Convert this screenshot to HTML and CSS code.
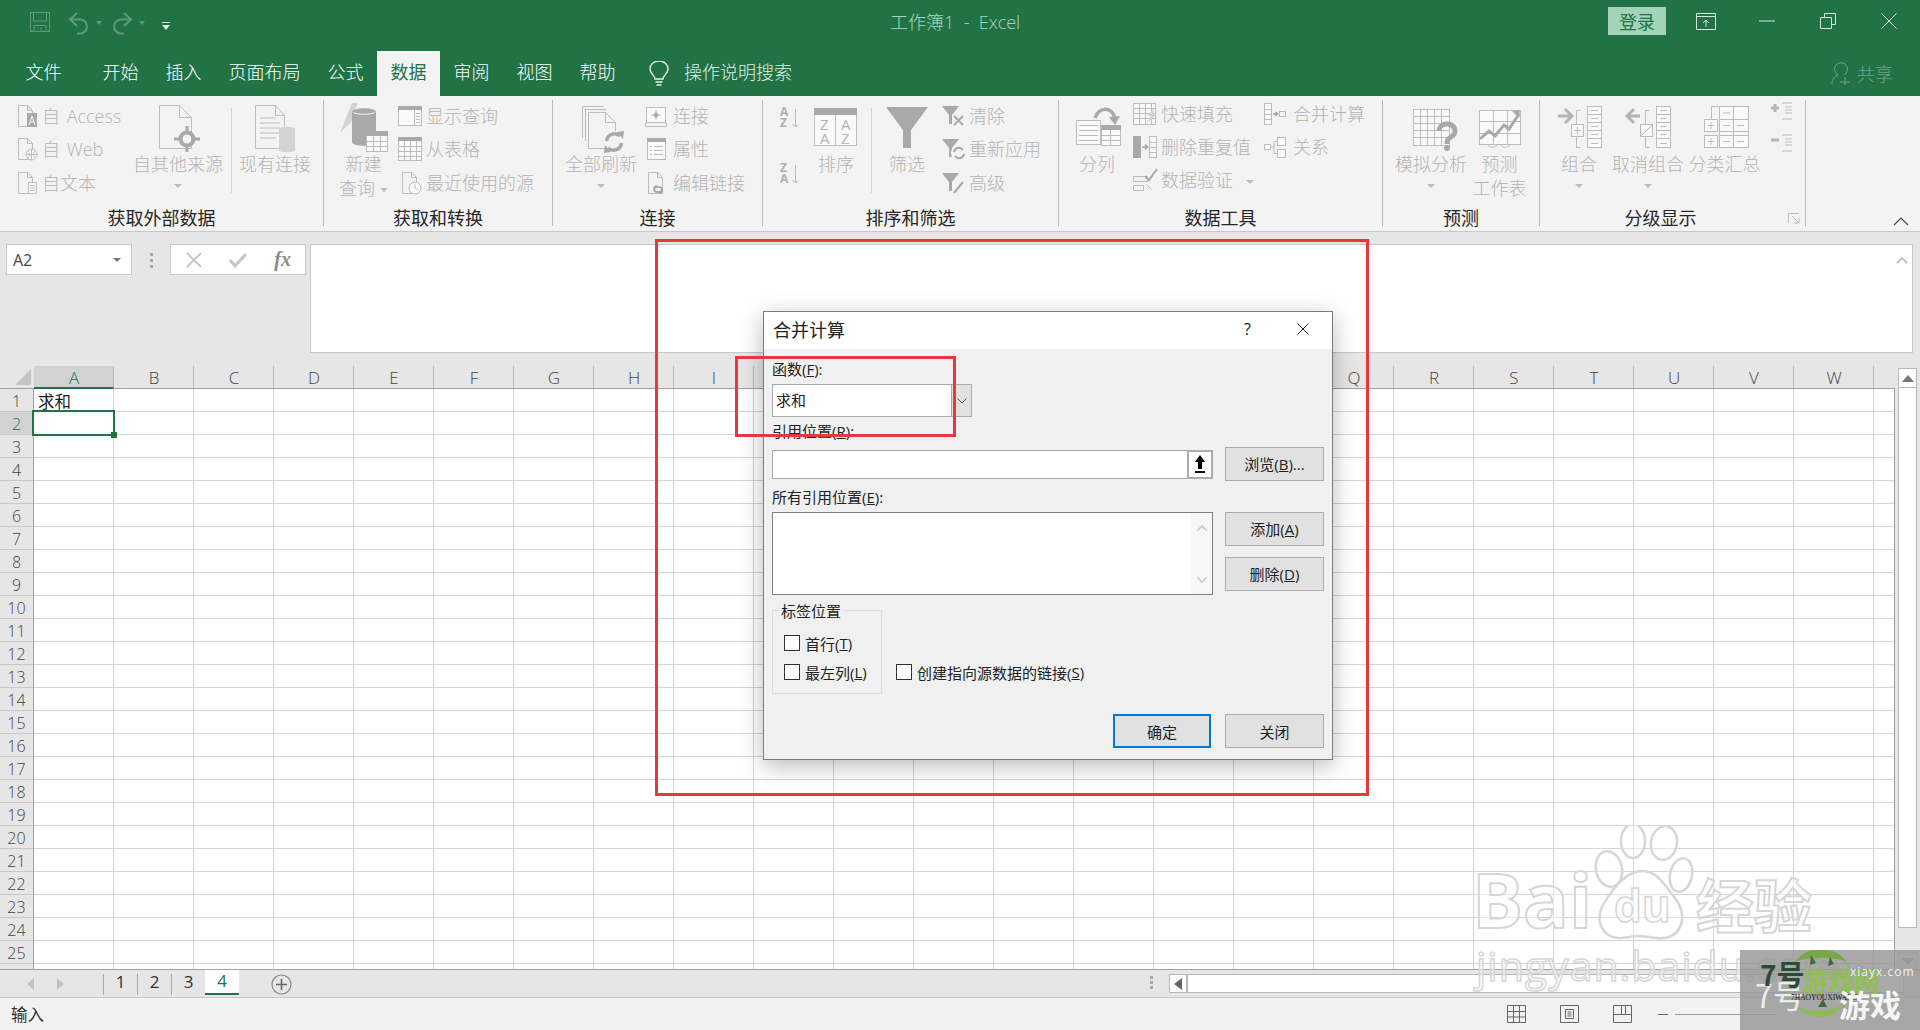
FILE: index.html
```html
<!DOCTYPE html>
<html lang="zh-CN">
<head>
<meta charset="utf-8">
<title>工作簿1 - Excel</title>
<link rel="stylesheet" href="styles.css">
</head>
<body>
<div class="app">
  <header class="titlebar">
    <div class="qat">
      <svg class="qi save" width="20" height="20" viewBox="0 0 20 20"><path d="M.5.5h19v19H.5z"/><path d="M3.5 1v8h13V1M4 13.5h12V19M4 13.5V19M11 15v4"/></svg>
      <svg class="qi undo" width="22" height="24" viewBox="0 0 22 24"><path d="M9 2 2 8.500l7 6.500" stroke-width="2"/><path d="M3 8.500h9a7 7 0 0 1 0 14h-3" stroke-width="2"/></svg>
      <span class="qcaret"></span>
      <svg class="qi redo" width="22" height="24" viewBox="0 0 22 24"><path d="M13 2l7 6.500-7 6.500" stroke-width="2"/><path d="M19 8.500h-9a7 7 0 0 0 0 14h3" stroke-width="2"/></svg>
      <span class="qcaret"></span>
      <span class="qcustom"></span>
    </div>
    <div class="doc-title">工作簿1&nbsp; -&nbsp; Excel</div>
    <div class="win">
      <span class="login">登录</span>
      <span class="winbtn"><svg class="wi" width="20" height="17" viewBox="0 0 20 17"><path d="M.5.5h19v16H.5zM.5 3.500h19M10 14V7M7 10l3-3 3 3"/></svg></span>
      <span class="winbtn"><svg class="wi" width="16" height="2" viewBox="0 0 16 2"><path d="M0 1h16"/></svg></span>
      <span class="winbtn"><svg class="wi" width="16" height="16" viewBox="0 0 16 16"><path d="M.5 4.500h11v11H.5zM4.500 4V.5h11v11H12"/></svg></span>
      <span class="winbtn"><svg class="wi" width="16" height="16" viewBox="0 0 16 16"><path d="M.5.5l15 15M15.500.5l-15 15"/></svg></span>
    </div>
  </header>

  <nav class="tabs">
    <span class="tab tab-file">文件</span>
    <span class="tab">开始</span>
    <span class="tab">插入</span>
    <span class="tab">页面布局</span>
    <span class="tab">公式</span>
    <span class="tab active">数据</span>
    <span class="tab">审阅</span>
    <span class="tab">视图</span>
    <span class="tab">帮助</span>
    <svg class="bulb" width="20" height="26" viewBox="0 0 20 26"><path d="M6 18c0-4-5-5-5-10a9 8 0 0 1 18 0c0 5-5 6-5 10zM6.500 21h7M7.500 24h5" stroke="#e8f2ec" stroke-width="1.400" fill="none"/></svg>
    <span class="search">操作说明搜索</span>
    <span class="share">
      <svg width="20" height="24" viewBox="0 0 20 24"><path d="M1 23c0-5 3-8 6-9a6.500 6.500 0 1 1 6 0M9 21h10M14 16v8" fill="none" stroke="#6ba587"/></svg>
      共享
    </span>
  </nav>

  <section class="ribbon">
    <!-- 获取外部数据 -->
    <div class="group g1">
      <div class="body">
        <div class="small-col w116 gap4">
          <div class="small"><svg class="ic" width="21" height="24" viewBox="0 0 21 24"><path d="M1.500 1.500h9l5 5v16h-14zM10.500 1.500v5h5"/><rect class="d" x="10" y="9" width="10" height="14"/><path class="wl" d="M12 21l3-9 3 9M13 18h4"/></svg><span class="latin">自 Access</span></div>
          <div class="small"><svg class="ic" width="21" height="24" viewBox="0 0 21 24"><path d="M1.500 1.500h9l5 5v16h-14zM10.500 1.500v5h5"/><circle class="wf" cx="14.500" cy="17.500" r="5.500"/><path d="M9 17.500h11M14.500 12v11M11 13.500c2 3 2 5 0 8M18 13.500c-2 3-2 5 0 8"/></svg><span class="latin">自 Web</span></div>
          <div class="small"><svg class="ic" width="21" height="24" viewBox="0 0 21 24"><path d="M1.500 1.500h9l5 5v16h-14zM10.500 1.500v5h5"/><rect class="wf" x="11.500" y="11.500" width="8" height="11"/><path d="M13 14.500h5M13 17h5M13 19.500h5"/></svg><span>自文本</span></div>
        </div>
        <div class="big w90">
          <svg class="ic bigi" width="48" height="48" viewBox="0 0 48 48"><path d="M5.500 1.500h20l12 12v31h-32zM25.500 1.500v12h12"/><circle class="ring" cx="33" cy="35" r="6.500"/><path class="thick" d="M33 22v6M33 42v6M20 35h6M40 35h6"/></svg>
          <span>自其他来源</span><i class="caret"></i>
        </div>
        <div class="vsep ml8"></div>
        <div class="big w86">
          <svg class="ic bigi" width="42" height="48" viewBox="0 0 42 48"><path d="M1.500 1.500h20l9 10v33h-29zM21.500 1.500v10h9M6 14h16M6 19h20M6 24h20M6 29h20M6 34h16"/><path class="lg" d="M25 25c0-3 16-3 16 0v21c0 3-16 3-16 0z"/></svg>
          <span>现有连接</span>
        </div>
      </div>
      <div class="glabel">获取外部数据</div>
    </div>

    <!-- 获取和转换 -->
    <div class="group g2">
      <div class="body pl5">
        <div class="big w69">
          <svg class="ic bigi" width="48" height="48" viewBox="0 0 48 48"><path class="lg" d="M0 29 12-1h6l-5 11h6z"/><path class="d" d="M12 8c0-5 24-5 24 0v30c0 5-24 5-24 0z"/><path class="wl" d="M13 8c2 3 20 3 22 0"/><rect class="wf" x="26.500" y="27.500" width="21" height="20"/><rect class="d" x="26" y="27" width="22" height="5"/><path d="M26.500 37.500h21M26.500 42.500h21M33.500 32v15M40.500 32v15"/></svg>
          <span>新建</span><span>查询<i class="caret inl"></i></span>
        </div>
        <div class="small-col gap4">
          <div class="small"><svg class="ic" width="24" height="24" viewBox="0 0 24 24"><rect class="wf" x=".5" y="2.500" width="23" height="19"/><rect class="d" x="0" y="2" width="24" height="4"/><path d="M16.500 6v15M18 9.500h4M18 12.500h4M18 15.500h4M18 18.500h4"/></svg><span>显示查询</span></div>
          <div class="small"><svg class="ic" width="24" height="24" viewBox="0 0 24 24"><rect class="wf" x=".5" y=".5" width="23" height="23"/><rect class="d" x="0" y="0" width="24" height="4"/><path d="M0 9.500h24M0 14.500h24M0 19.500h24M6.500 4v20M12.500 4v20M18.500 4v20"/></svg><span>从表格</span></div>
          <div class="small"><svg class="ic" width="24" height="24" viewBox="0 0 24 24"><path d="M4.500 1.500h9l5 5v16h-14zM13.500 1.500v5h5"/><circle class="wf" cx="17" cy="17" r="6"/><path d="M17 13.500V17l2.500 1.500"/></svg><span>最近使用的源</span></div>
        </div>
      </div>
      <div class="glabel">获取和转换</div>
    </div>

    <!-- 连接 -->
    <div class="group g3">
      <div class="body pl8">
        <div class="big w80">
          <svg class="ic bigi" width="48" height="48" viewBox="0 0 48 48"><path d="M5.500 34V2.500H26M8.500 37V5.500H29M11.500 8.500h17l10 10v26h-27zM28.500 8.500v10h10"/><circle class="bgf" cx="37" cy="38" r="11"/><path class="arrow" d="M29.500 37a8 8 0 0 1 13.500-5M44.500 39a8 8 0 0 1-13.500 5"/><path class="d" d="M40 28l7-1-1 8zM34 48l-7 1 1-8z"/></svg>
          <span>全部刷新</span><i class="caret"></i>
        </div>
        <div class="small-col ml4 gap6">
          <div class="small"><svg class="ic" width="22" height="24" viewBox="0 0 22 24"><rect class="wf" x="1.500" y="3.500" width="19" height="15"/><path d="M.5 18.500v4h21v-4M11 6v10M6 11h10"/><path class="d" d="M11 8l3 3-3 3-3-3z"/></svg><span>连接</span></div>
          <div class="small"><svg class="ic" width="22" height="24" viewBox="0 0 22 24"><rect class="wf" x="2.500" y="1.500" width="18" height="21"/><rect class="d" x="2" y="1" width="19" height="4"/><path d="M5 9.500h2M5 13.500h2M5 17.500h2M9 9.500h9M9 13.500h9M9 17.500h9"/></svg><span>属性</span></div>
          <div class="small"><svg class="ic" width="22" height="24" viewBox="0 0 22 24"><path d="M3.500 1.500h9l5 5v16h-14zM12.500 1.500v5h5"/><path class="chain" d="M9 19a3 3 0 0 1 3-3h2a3 3 0 0 1 0 6M17 18a3 3 0 0 1-3 3h-2a3 3 0 0 1 0-6"/></svg><span>编辑链接</span></div>
        </div>
      </div>
      <div class="glabel">连接</div>
    </div>

    <!-- 排序和筛选 -->
    <div class="group g4">
      <div class="body pl17">
        <div class="sort-col">
          <svg class="ic" width="21" height="24" viewBox="0 0 21 24"><text class="st" x="0" y="11">A</text><text class="st" x="0" y="22">Z</text><path d="M15.500 4v18M12.500 19l3 3 3-3"/></svg>
          <svg class="ic" width="21" height="24" viewBox="0 0 21 24"><text class="st" x="0" y="11">Z</text><text class="st" x="0" y="22">A</text><path d="M15.500 4v18M12.500 19l3 3 3-3"/></svg>
        </div>
        <div class="big w44 ml13">
          <svg class="ic bigi" width="44" height="48" viewBox="0 0 44 48"><rect class="wf" x=".5" y="4.500" width="42" height="37"/><rect class="d" x="0" y="4" width="43" height="7"/><path d="M21.500 11v30"/><text class="lt" x="6" y="26">Z</text><text class="lt" x="27" y="26">A</text><text class="lt" x="6" y="40">A</text><text class="lt" x="27" y="40">Z</text></svg>
          <span>排序</span>
        </div>
        <div class="vsep ml13"></div>
        <div class="big w44 ml13">
          <svg class="ic bigi" width="44" height="48" viewBox="0 0 44 48"><path class="d" d="M1 3h42L26 26v18h-8V26z"/></svg>
          <span>筛选</span>
        </div>
        <div class="small-col ml13 gap2">
          <div class="small"><svg class="ic" width="25" height="24" viewBox="0 0 25 24"><path class="d" d="M0 2h17L10 11v9H7v-9z"/><path class="xs" d="M12 12l9 9M21 12l-9 9"/></svg><span>清除</span></div>
          <div class="small"><svg class="ic" width="25" height="24" viewBox="0 0 25 24"><path class="d" d="M0 2h17L10 11v9H7v-9z"/><circle class="bgf" cx="17" cy="16" r="8"/><path class="arrow2" d="M12 15a5 5 0 0 1 9-2M22 17a5 5 0 0 1-9 2"/></svg><span>重新应用</span></div>
          <div class="small"><svg class="ic" width="25" height="24" viewBox="0 0 25 24"><path class="d" d="M0 2h17L10 11v9H7v-9z"/><path class="xs" d="M12 22l9-11"/></svg><span>高级</span></div>
        </div>
      </div>
      <div class="glabel">排序和筛选</div>
    </div>

    <!-- 数据工具 -->
    <div class="group g5">
      <div class="body pl8">
        <div class="big w60">
          <svg class="ic bigi" width="48" height="48" viewBox="0 0 48 48"><rect class="wf" x="3.500" y="16.500" width="24" height="24"/><path d="M6 21.500h19M6 26.500h19M6 31.500h19M6 36.500h19"/><rect class="wf" x="28.500" y="21.500" width="19" height="20"/><rect class="d" x="28" y="21" width="20" height="5"/><path d="M28.500 31.500h19M28.500 36.500h19M37.500 26v15"/><path class="arrow" d="M22 14C26 3 38 2 42 14"/><path class="d" d="M36 13l11-1-5 9z"/></svg>
          <span>分列</span>
        </div>
        <div class="small-col ml6 rows33 w131 gap3">
          <div class="small"><svg class="ic" width="25" height="24" viewBox="0 0 25 24"><rect class="wf" x=".5" y="1.500" width="22" height="21"/><path d="M0 6.500h23M0 11.500h23M0 16.500h23M6.500 1v21M12.500 1v21M18.500 1v21"/><path class="lg" d="M21 6l-7 8h4l-5 8 11-10h-4z"/></svg><span>快速填充</span></div>
          <div class="small"><svg class="ic" width="25" height="24" viewBox="0 0 25 24"><rect class="d" x="0" y="1" width="8" height="22"/><rect class="wf" x="16.500" y="1.500" width="7" height="21"/><path d="M16.500 7.500h7M16.500 12.500h7M16.500 17.500h7"/><path class="xs2" d="M9 12h5M12 9.500l2.500 2.500-2.500 2.500"/></svg><span>删除重复值</span></div>
          <div class="small"><svg class="ic" width="25" height="24" viewBox="0 0 25 24"><path d="M.5 8.500h14v5H.5zM.5 17.500h10v5H.5z"/><path class="xs" d="M12 8l4 4 8-11"/><circle class="bgf" cx="16" cy="19" r="3.500"/><path d="M13.500 16.500l5 5"/></svg><span>数据验证<i class="caret inl2"></i></span></div>
        </div>
        <div class="small-col rows33 gap7">
          <div class="small"><svg class="ic" width="22" height="24" viewBox="0 0 22 24"><rect class="wf" x=".5" y="1.500" width="7" height="21"/><path d="M.5 7.500h7M.5 12.500h7M.5 17.500h7"/><path class="xs2" d="M9 12h4M11.500 10l2 2-2 2"/><rect x="15.500" y="9.500" width="6" height="5"/></svg><span>合并计算</span></div>
          <div class="small"><svg class="ic" width="22" height="24" viewBox="0 0 22 24"><rect class="wf" x=".5" y="9.500" width="6" height="5"/><rect class="wf" x="13.500" y="2.500" width="8" height="8"/><rect class="wf" x="13.500" y="14.500" width="8" height="8"/><path d="M7 12h3V6.500h3M10 12v6.500h3"/></svg><span>关系</span></div>
        </div>
      </div>
      <div class="glabel">数据工具</div>
    </div>

    <!-- 预测 -->
    <div class="group g6">
      <div class="body pl9">
        <div class="big w78">
          <svg class="ic bigi" width="50" height="48" viewBox="0 0 50 48"><rect class="wf" x="7.500" y="5.500" width="36" height="36"/><path d="M7.500 12.500h36M7.500 19.500h36M7.500 26.500h36M7.500 33.500h36M14.500 5v36M21.500 5v36M28.500 5v36M35.500 5v36"/><path class="qm" d="M33 27a8 7 0 1 1 12 6c-3 2-4 3-4 7"/><circle class="d" cx="41" cy="44" r="3"/></svg>
          <span>模拟分析</span><i class="caret"></i>
        </div>
        <div class="big w59">
          <svg class="ic bigi" width="48" height="48" viewBox="0 0 48 48"><rect class="wf" x="3.500" y="6.500" width="41" height="34"/><path d="M3.500 17.500h41M3.500 29.500h41M17.500 6v35M31.500 6v35M12 41c0 3 8 3 9 0M25 41c0 3 8 3 9 0"/><path class="chart" d="M4 35l9-8 6 5 9-11 5 4 10-15"/><path class="d" d="M36 7l8-1-1 8z"/></svg>
          <span>预测</span><span>工作表</span>
        </div>
      </div>
      <div class="glabel">预测</div>
    </div>

    <!-- 分级显示 -->
    <div class="group g7">
      <div class="body pl12">
        <div class="big w54">
          <svg class="ic bigi" width="48" height="48" viewBox="0 0 48 48"><path class="ar" d="M3 12h13M10 5l7 7-7 7"/><path d="M25.500 6.500h-4V20M21.500 33v10.500h4"/><rect class="wf" x="16.500" y="20.500" width="12" height="12"/><path d="M22.500 23v7M19 26.500h7"/><rect class="wf" x="32.500" y="2.500" width="14" height="41"/><path d="M32.500 10.500h14M32.500 18.500h14M32.500 26.500h14M32.500 34.500h14M36 6.500h7M36 14.500h7M36 22.500h7M36 30.500h7M36 39.500h7"/></svg>
          <span>组合</span><i class="caret"></i>
        </div>
        <div class="big w80 ml2">
          <svg class="ic bigi" width="48" height="48" viewBox="0 0 48 48"><path class="ar" d="M16 12H3M10 5l-7 7 7 7"/><path d="M25.500 6.500h-4V20M21.500 33v10.500h4"/><rect class="wf" x="16.500" y="20.500" width="12" height="12"/><path d="M17 32l11-11"/><rect class="wf" x="32.500" y="2.500" width="14" height="41"/><path d="M32.500 10.500h14M32.500 18.500h14M32.500 26.500h14M32.500 34.500h14M36 6.500h7M36 14.500h7M36 22.500h7M36 30.500h7M36 39.500h7"/></svg>
          <span>取消组合</span><i class="caret"></i>
        </div>
        <div class="big w73">
          <svg class="ic bigi" width="48" height="48" viewBox="0 0 48 48"><path d="M17.500 2.500h-7V15"/><rect class="wf" x="3.500" y="15.500" width="13" height="12"/><rect class="wf" x="3.500" y="31.500" width="13" height="12"/><path d="M10 18v7M6.500 21.500h7M10 34v7M6.500 37.500h7"/><rect class="wf" x="18.500" y="2.500" width="29" height="41"/><path d="M32.500 2.500v41M18.500 15.500h29M18.500 27.500h29M18.500 31.500h29M22 9h7M22 21.500h7M22 37.500h7M36 21.500h7M36 37.500h7"/></svg>
          <span>分类汇总</span>
        </div>
        <div class="plusminus">
          <svg class="ic" width="23" height="22" viewBox="0 0 23 22"><path class="ar" d="M1 8h8M5 4v8"/><path d="M12 3h10M15 7h7M15 10h7M15 13h7M12 19h10"/></svg>
          <svg class="ic" width="23" height="22" viewBox="0 0 23 22"><path class="ar" d="M1 8h8"/><path d="M12 3h10M15 7h7M15 10h7M15 13h7M12 19h10"/></svg>
        </div>
      </div>
      <div class="glabel pr24">分级显示</div>
      <svg class="launcher" width="12" height="11" viewBox="0 0 12 11"><path d="M.5 10V.5H11M4 3l6 6M6 10h5V5" fill="none" stroke="#bbb"/></svg>
    </div>
    <svg class="collapse" width="16" height="9" viewBox="0 0 16 9"><path d="M1 8l7-7 7 7" fill="none" stroke="#444" stroke-width="1.200"/></svg>
  </section>

  <section class="formula">
    <div class="namebox"><span>A2</span><i class="caret dark"></i></div>
    <div class="dots"><i></i><i></i><i></i></div>
    <div class="fxbox">
      <svg width="16" height="16" viewBox="0 0 16 16"><path d="M1 1l14 14M15 1L1 15" stroke="#c6c6c6" stroke-width="2"/></svg>
      <svg width="18" height="16" viewBox="0 0 18 16"><path d="M1 8l5 6L17 2" fill="none" stroke="#c6c6c6" stroke-width="3"/></svg>
      <span class="fx">fx</span>
    </div>
    <div class="finput"><svg width="12" height="7" viewBox="0 0 12 7"><path d="M1 6l5-5 5 5" fill="none" stroke="#c4c4c4" stroke-width="2"/></svg></div>
  </section>

  <section class="sheet">
    <div class="sheet-main">
      <div class="colhead">
        <div class="corner"><svg width="16" height="16" viewBox="0 0 16 16"><path d="M16 0v16H0z" fill="#c4c4c4"/></svg></div>
        <div class="ch sel">A</div><div class="ch">B</div><div class="ch">C</div><div class="ch">D</div><div class="ch">E</div><div class="ch">F</div><div class="ch">G</div><div class="ch">H</div><div class="ch">I</div><div class="ch">J</div><div class="ch">K</div><div class="ch">L</div><div class="ch">M</div><div class="ch">N</div><div class="ch">O</div><div class="ch">P</div><div class="ch">Q</div><div class="ch">R</div><div class="ch">S</div><div class="ch">T</div><div class="ch">U</div><div class="ch">V</div><div class="ch">W</div>
      </div>
      <div class="sheet-body">
        <div class="rowhead">
          <div class="rh">1</div><div class="rh sel">2</div><div class="rh">3</div><div class="rh">4</div><div class="rh">5</div><div class="rh">6</div><div class="rh">7</div><div class="rh">8</div><div class="rh">9</div><div class="rh">10</div><div class="rh">11</div><div class="rh">12</div><div class="rh">13</div><div class="rh">14</div><div class="rh">15</div><div class="rh">16</div><div class="rh">17</div><div class="rh">18</div><div class="rh">19</div><div class="rh">20</div><div class="rh">21</div><div class="rh">22</div><div class="rh">23</div><div class="rh">24</div><div class="rh">25</div>
        </div>
        <div class="cells">
          <div class="cell">求和</div>
          <div class="cell active-cell"></div>
        </div>
      </div>
    </div>
    <div class="vscroll">
      <div class="vbtn"><svg width="12" height="7" viewBox="0 0 12 7"><path d="M0 7l6-7 6 7z" fill="#777"/></svg></div>
      <div class="vtrack"></div>
      <div class="vbtn bare"><svg width="12" height="7" viewBox="0 0 12 7"><path d="M0 0l6 7 6-7z" fill="#999"/></svg></div>
    </div>
  </section>

  <section class="sheetbar">
    <div class="navs">
      <svg width="8" height="12" viewBox="0 0 8 12"><path d="M7 0v12L0 6z" fill="#c4c4c4"/></svg>
      <svg width="8" height="12" viewBox="0 0 8 12"><path d="M1 0v12l7-6z" fill="#c4c4c4"/></svg>
    </div>
    <div class="stab">1</div>
    <div class="stab">2</div>
    <div class="stab">3</div>
    <div class="stab on">4</div>
    <svg class="addsheet" width="21" height="21" viewBox="0 0 21 21"><circle cx="10.500" cy="10.500" r="9.500" fill="none" stroke="#8a8a8a" stroke-width="1.200"/><path d="M10.500 5v11M5 10.500h11" stroke="#666" stroke-width="1.600"/></svg>
    <div class="dots small-dots"><i></i><i></i><i></i></div>
    <div class="hscroll">
      <div class="hbtn"><svg width="8" height="12" viewBox="0 0 8 12"><path d="M8 0v12L0 6z" fill="#666"/></svg></div>
    </div>
  </section>

  <footer class="status">
    <span>输入</span>
    <div class="views">
      <svg width="19" height="18" viewBox="0 0 19 18"><path d="M.5.500h18v17H.5zM.5 6.500h18M.5 12h18M6.500.5v17M12.500.5v17" fill="none" stroke="#666"/></svg>
      <svg width="19" height="18" viewBox="0 0 19 18"><path d="M.5.500h18v17H.5zM5.500 4.500h8v9h-8zM7.500 7h4M7.500 9h4M7.500 11h4" fill="none" stroke="#666"/></svg>
      <svg width="19" height="18" viewBox="0 0 19 18"><path d="M.5.500h18v17H.5zM.5 9.500h8V.5M8.500 9.500h10M12.500.5v9" fill="none" stroke="#666"/></svg>
      <div class="zoombar"><i class="minus"></i><i class="line"></i></div>
    </div>
  </footer>
</div>

<!-- 合并计算 dialog -->
<div class="dialog">
  <div class="dlg-title">
    <span class="dlg-name">合并计算</span>
    <span class="dlg-help">?</span>
    <svg class="dlg-x" width="12" height="12" viewBox="0 0 12 12"><path d="M.5.500l11 11M11.500.5l-11 11" stroke="#222"/></svg>
  </div>
  <div class="dlg-body">
    <div class="lbl">函数(<u>F</u>):</div>
    <div class="combo">
      <div class="combo-val">求和</div>
      <div class="combo-btn"><svg width="10" height="6" viewBox="0 0 10 6"><path d="M.5.500l4.500 4.500L9.500.5" fill="none" stroke="#555"/></svg></div>
    </div>
    <div class="lbl mt5">引用位置(<u>R</u>):</div>
    <div class="form-row mt5 center">
      <div class="refedit">
        <div class="ref-input"></div>
        <div class="ref-btn"><svg width="14" height="18" viewBox="0 0 14 18"><path d="M7 0l5 7H9v7H5V7H2zM2 16h10v2H2z" fill="#000"/></svg></div>
      </div>
      <div class="btn">浏览(<u>B</u>)...</div>
    </div>
    <div class="lbl mt7">所有引用位置(<u>E</u>):</div>
    <div class="form-row mt4">
      <div class="listbox">
        <div class="list-scroll">
          <svg width="10" height="6" viewBox="0 0 10 6"><path d="M.5 5.500L5 1l4.500 4.500" fill="none" stroke="#c4c4c4" stroke-width="1.500"/></svg>
          <svg width="10" height="6" viewBox="0 0 10 6"><path d="M.5.500L5 5 9.500.5" fill="none" stroke="#c4c4c4" stroke-width="1.500"/></svg>
        </div>
      </div>
      <div class="btn-col">
        <div class="btn">添加(<u>A</u>)</div>
        <div class="btn">删除(<u>D</u>)</div>
      </div>
    </div>
    <div class="lower">
      <div class="fieldset">
        <div class="legend">标签位置</div>
        <label class="chk first"><i></i>首行(<u>T</u>)</label>
        <label class="chk"><i></i>最左列(<u>L</u>)</label>
      </div>
      <label class="chk link"><i></i>创建指向源数据的链接(<u>S</u>)</label>
    </div>
    <div class="actions">
      <div class="btn primary">确定</div>
      <div class="btn">关闭</div>
    </div>
  </div>
</div>

<div class="redbox big-red"></div>
<div class="redbox small-red"></div>

<!-- Baidu watermark -->
<div class="wm">
  <svg class="paw" width="130" height="120" viewBox="0 0 130 120"><g fill="rgba(255,255,255,.35)" stroke="#d6d6d6" stroke-width="2.500"><ellipse cx="34" cy="44" rx="13" ry="18" transform="rotate(-12 34 44)"/><ellipse cx="58" cy="16" rx="12" ry="17"/><ellipse cx="89" cy="18" rx="13" ry="17" transform="rotate(10 89 18)"/><ellipse cx="106" cy="50" rx="11" ry="17" transform="rotate(12 106 50)"/><path d="M68 46c14 0 22 14 34 30 12 18 2 40-20 37-10-1-18-4-28-1-24 6-36-14-26-32 8-14 22-34 40-34z"/></g></svg>
  <span class="wm-bai">Bai</span>
  <span class="wm-du">du</span>
  <span class="wm-jy">经验</span>
  <span class="wm-url">jingyan.baidu.com</span>
</div>
<div class="logo7">
  <svg class="logo-ring" width="72" height="72" viewBox="0 0 72 72"><circle cx="36" cy="36" r="33" fill="none" stroke="#8fb36d" stroke-width="1.500"/><path d="M12 14C24-2 50-2 62 14 48 10 26 10 12 14z" fill="#79a84a"/><path d="M14 60c12 14 34 14 46-2-16 6-32 8-46 2z" fill="#8dbb5a"/><path d="M27 8l5 8-6 2zM46 10l4 7-6 2zM34 60l5-8 4 8z" fill="#3f6b3c"/></svg>
  <span class="lg-7b">7号</span>
  <span class="lg-7">7号</span>
  <span class="lg-site">游戏网</span>
  <span class="lg-url">xiayx.com</span>
  <span class="lg-pin">7HAOYOUXIWANG</span>
  <span class="lg-game">游戏</span>
</div>
</body>
</html>
```

FILE: styles.css
```css
* { box-sizing: border-box; }
html, body { margin: 0; padding: 0; height: 1030px; overflow: hidden; }
body {
  font-family: "Open Sans", "Noto Sans CJK SC", sans-serif;
  font-weight: 300;
  background: #fff;
  color: #222;
  position: relative;
}
.app { width: 1920px; height: 1030px; display: flex; flex-direction: column; }

/* title bar */
.titlebar { height: 51px; background: #217346; display: flex; align-items: flex-start; flex: none; }
.qat { width: 890px; padding: 11px 0 0 30px; display: flex; align-items: flex-start; flex: none; }
.qi { fill: none; stroke: #5a9a78; }
.save { margin-top: 1px; }
.undo { margin-left: 18px; }
.redo { margin-left: 9px; }
.qcaret { width: 0; height: 0; border: 3.5px solid transparent; border-top: 4px solid #5a9a78; margin: 10px 0 0 6px; }
.qcustom { width: 8px; height: 7px; margin: 11px 0 0 17px; border-top: 1px solid #dfeee6; border-bottom: 0; position: relative; }
.qcustom::after { content: ""; position: absolute; left: 0; top: 2px; border: 4px solid transparent; border-top: 5px solid #dfeee6; }
.doc-title { font-size: 18px; color: #a5d6ba; line-height: 44px; }
.win { margin-left: auto; margin-top: 7px; margin-right: 1px; display: flex; align-items: stretch; height: 28px; }
.login { width: 58px; background: #a3d3b8; color: #217346; font-size: 18px; line-height: 30px; text-align: center; margin-right: 9px; font-weight: 400; }
.winbtn { width: 61px; display: flex; align-items: center; justify-content: center; }
.wi { fill: none; stroke: #d6e8dd; stroke-width: 1; display: block; }

/* tabs */
.tabs { height: 45px; background: #217346; display: flex; align-items: stretch; padding-left: 12px; flex: none; font-size: 18px; color: #fff; }
.tab { padding: 0 13.5px; line-height: 42px; flex: none; }
.tab-file { margin-right: 14px; }
.tab.active { background: #f3f3f3; color: #217346; font-weight: 400; }
.bulb { align-self: center; margin-left: 20px; }
.search { margin-left: 15px; line-height: 42px; font-size: 18px; color: #dfeee6; }
.share { margin-left: auto; padding-right: 27px; padding-bottom: 2px; display: flex; align-items: center; gap: 6px; color: #6ba587; }

/* ribbon */
.ribbon { height: 136px; background: #f3f3f3; border-bottom: 1px solid #c8c8c8; display: flex; flex: none; padding-top: 4px; font-size: 18px; color: #b4b4b4; position: relative; }
.group { display: flex; flex-direction: column; height: 126px; border-right: 1px solid #b8b8b8; flex: none; position: relative; }
.g1 { width: 324px; } .g2 { width: 229px; } .g3 { width: 210px; } .g4 { width: 296px; }
.g5 { width: 324px; } .g6 { width: 157px; } .g7 { width: 266px; }
.body { flex: 1; display: flex; align-items: flex-start; min-height: 0; padding-left: 17px; }
.pl5 { padding-left: 5px; } .pl8 { padding-left: 8px; } .pl9 { padding-left: 9px; } .pl12 { padding-left: 12px; } .pl17 { padding-left: 17px; }
.glabel { height: 24px; line-height: 22px; margin-bottom: -5px; text-align: center; color: #262626; flex: none; font-weight: 400; font-size: 18px; }
.pr24 { padding-right: 24px; }
.launcher { position: absolute; right: 5px; bottom: 2px; }
.collapse { position: absolute; right: 11px; top: 121px; }

.small-col { display: flex; flex-direction: column; flex: none; margin-top: -1px; }
.small { height: 33.500px; display: flex; align-items: center; white-space: nowrap; }
.small span { margin-top: -2px; }
.latin { word-spacing: 2px; }
.rows33 { margin-top: -3px; }
.rows33 .small { height: 33px; }
.gap2 .small { gap: 2px; } .gap3 .small { gap: 3px; } .gap4 .small { gap: 4px; } .gap6 .small { gap: 6px; } .gap7 .small { gap: 7px; }
.w116 { width: 116px; } .w131 { width: 131px; }
.big { display: flex; flex-direction: column; align-items: center; flex: none; line-height: 24px; white-space: nowrap; }
.big span { display: block; }
.bigi { margin-top: 4px; overflow: visible; height: 48px; }
.w90 { width: 90px; } .w86 { width: 86px; } .w69 { width: 69px; } .w80 { width: 80px; } .w44 { width: 44px; } .w60 { width: 60px; } .w78 { width: 78px; } .w59 { width: 59px; } .w54 { width: 54px; } .w73 { width: 73px; }
.ml2 { margin-left: 2px; } .ml4 { margin-left: 4px; } .ml6 { margin-left: 6px; } .ml8 { margin-left: 8px; } .ml13 { margin-left: 13px; }
.vsep { width: 1px; height: 85px; margin-top: 8px; background: #d2d2d2; flex: none; }
.sort-col { width: 21px; display: flex; flex-direction: column; gap: 32px; padding-top: 5px; flex: none; }
.plusminus { margin-left: 9px; display: flex; flex-direction: column; gap: 10px; flex: none; }
.caret { display: block; width: 0; height: 0; border: 4px solid transparent; border-top: 4px solid #bdbdbd; border-bottom: 0; margin-top: 8px; }
.caret.inl { display: inline-block; margin: 0 0 3px 5px; }
.caret.inl2 { display: inline-block; margin: 0 0 3px 13px; }
.caret.dark { border-top-color: #777; margin: 0; }

/* icons */
.ic { fill: none; stroke: #bcbcbc; stroke-width: 1; display: block; flex: none; overflow: visible; }
.ic .d { fill: #a9a9a9; stroke: none; }
.ic .lg { fill: #d4d4d4; stroke: none; }
.ic .wf { fill: #f9f9f9; }
.ic .bgf { fill: #f3f3f3; stroke: none; }
.ic .wl { stroke: #f3f3f3; }
.ic .ring { stroke: #a9a9a9; stroke-width: 4; }
.ic .thick { stroke: #a9a9a9; stroke-width: 3; }
.ic .arrow { stroke: #a9a9a9; stroke-width: 3.500; }
.ic .arrow2 { stroke: #a9a9a9; stroke-width: 2; }
.ic .xs { stroke: #a9a9a9; stroke-width: 2; }
.ic .xs2 { stroke: #a0a0a0; stroke-width: 1.500; }
.ic .chain { stroke: #a0a0a0; stroke-width: 1.600; }
.ic .qm { stroke: #a9a9a9; stroke-width: 5; }
.ic .chart { stroke: #a9a9a9; stroke-width: 3; }
.ic .ar { stroke: #b4b4b4; stroke-width: 3; }
.ic .st { font: 700 12px "Open Sans", sans-serif; fill: #b0b0b0; stroke: none; }
.ic .lt { font: 400 15px "Open Sans", sans-serif; fill: #b4b4b4; stroke: none; }

/* formula bar */
.formula { height: 134px; background: #e6e6e6; display: flex; align-items: flex-start; padding: 12px 7px 0 6px; flex: none; }
.namebox { width: 126px; height: 31px; background: #fff; border: 1px solid #c8c8c8; display: flex; align-items: center; justify-content: space-between; padding: 0 10px 0 6px; font-size: 16px; color: #444; font-weight: 400; }
.dots { width: 38px; display: flex; flex-direction: column; align-items: center; gap: 3px; padding-top: 9px; flex: none; }
.dots i { width: 3px; height: 3px; background: #a8a8a8; display: block; }
.fxbox { width: 136px; height: 31px; background: #fff; border: 1px solid #c8c8c8; display: flex; align-items: center; justify-content: space-between; padding: 0 14px 0 15px; flex: none; }
.fx { font: italic 700 20px "Liberation Serif", serif; color: #8a8a8a; }
.finput { margin-left: 4px; flex: 1; height: 109px; background: #fff; border: 1px solid #c8c8c8; display: flex; justify-content: flex-end; padding: 12px 4px 0 0; }

/* sheet */
.sheet { height: 603px; display: flex; flex: none; background: #e6e6e6; }
.sheet-main { width: 1895px; display: flex; flex-direction: column; flex: none; }
.colhead { height: 23px; display: flex; flex: none; background: #e6e6e6; border-bottom: 1px solid #a0a0a0; }
.corner { width: 34px; height: 22px; display: flex; justify-content: flex-end; align-items: flex-end; padding: 0 3px 3px 0; flex: none; }
.ch { width: 80px; height: 22px; flex: none; text-align: center; font-size: 17px; line-height: 23px; color: #444; border-right: 1px solid #b8b8b8; padding-left: 1px; }
.ch.sel { background: #d2d2d2; color: #217346; border-bottom: 2px solid #217346; height: 23px; }
.sheet-body { flex: 1; display: flex; min-height: 0; }
.rowhead { width: 34px; flex: none; border-right: 1px solid #a0a0a0; }
.rh { height: 23px; border-bottom: 1px solid #c8c8c8; text-align: center; font-size: 16px; line-height: 25px; color: #444; }
.rh.sel { background: #d2d2d2; color: #217346; }
.cells {
  flex: 1;
  background-color: #fff;
  background-image:
    linear-gradient(to right, transparent 79px, #d4d4d4 79px),
    linear-gradient(to bottom, transparent 22px, #d4d4d4 22px);
  background-size: 80px 100%, 100% 23px;
  border-right: 1px solid #a0a0a0;
  display: grid;
  grid-template-columns: 80px;
  grid-auto-rows: 23px;
}
.cell { font-size: 16.500px; line-height: 26px; padding-left: 4px; color: #1a1a1a; font-weight: 400; white-space: nowrap; }
.active-cell { position: relative; margin: -2px -1px -1px -2px; border: 2px solid #217346; background: transparent; }
.active-cell::after { content: ""; position: absolute; right: -4px; bottom: -4px; width: 6px; height: 6px; background: #217346; }
.vscroll { flex: 1; padding: 2px 3px 0; display: flex; flex-direction: column; }
.vbtn { height: 19px; background: #fff; border: 1px solid #b8b8b8; border-bottom: 0; display: flex; align-items: center; justify-content: center; flex: none; }
.vbtn.bare { background: #e6e6e6; margin-top: 24px; border: 1px solid #cfcfcf; }
.vtrack { height: 541px; background: #fff; border: 1px solid #b8b8b8; flex: none; }

/* sheet tabs */
.sheetbar { height: 29px; background: #e6e6e6; border-top: 1px solid #a0a0a0; border-bottom: 1px solid #c8c8c8; display: flex; align-items: flex-start; flex: none; }
.navs { width: 103px; padding: 8px 0 0 27px; display: flex; gap: 21px; flex: none; }
.stab { width: 34px; height: 21px; margin-top: 4px; border-left: 1px solid #a8a8a8; text-align: center; font-size: 17px; line-height: 16px; color: #333; flex: none; font-weight: 400; }
.stab.on { height: 25px; margin-top: 0; width: 34px; background: #fff; border-left: 0; border-bottom: 2px solid #217346; color: #217346; line-height: 22px; }
.addsheet { margin: 4px 0 0 32px; flex: none; }
.small-dots { width: 20px; margin-left: 849px; padding-top: 6px; gap: 2px; }
.hscroll { margin-left: 8px; width: 735px; height: 19px; margin-top: 4px; background: #fff; border: 1px solid #b8b8b8; flex: none; }
.hbtn { width: 18px; height: 17px; display: flex; align-items: center; justify-content: center; border-right: 2px solid #b8b8b8; }

/* status bar */
.status { flex: 1; background: #f2f2f2; display: flex; align-items: center; padding-left: 11px; font-size: 16.500px; color: #333; font-weight: 400; }
.views { margin-left: auto; display: flex; align-items: center; gap: 34px; margin-right: 2px; }
.zoombar { width: 260px; display: flex; align-items: center; gap: 7px; margin-left: -8px; }
.zoombar .minus { width: 10px; height: 1px; background: #666; }
.zoombar .line { width: 100px; height: 1px; background: #999; }

/* dialog */
.dialog { position: absolute; left: 763px; top: 311px; width: 570px; height: 449px; background: #f0f0f0; border: 1px solid #7c7c7c; box-shadow: 0 6px 22px rgba(0,0,0,.28); display: flex; flex-direction: column; font-size: 15px; color: #222; }
.dlg-title { height: 37px; background: #fff; display: flex; align-items: center; flex: none; padding: 0 0 3px 9px; }
.dlg-name { font-size: 18px; font-weight: 400; }
.dlg-help { margin-left: auto; font-size: 16px; font-weight: 400; }
.dlg-x { margin: 0 23px 0 46px; }
.dlg-body { flex: 1; padding: 11px 8px 0 8px; }
.lbl { height: 20px; line-height: 18px; font-weight: 400; white-space: nowrap; }
.mt5 { margin-top: 5px; } .mt7 { margin-top: 7px; } .mt4 { margin-top: 4px; }
.combo { display: flex; width: 200px; height: 33px; margin-top: 4px; }
.combo-val { width: 180px; background: #fff; border: 1px solid #a8a8a8; padding-left: 3px; line-height: 30px; font-weight: 400; }
.combo-btn { flex: 1; background: #e1e1e1; border: 1px solid #adadad; border-left: 0; display: flex; align-items: center; justify-content: center; }
.form-row { display: flex; justify-content: space-between; align-items: flex-start; }
.form-row.center { align-items: center; }
.refedit { width: 441px; height: 29px; display: flex; }
.ref-input { flex: 1; background: #fff; border: 1px solid #a8a8a8; border-right: 0; }
.ref-btn { width: 26px; background: #fff; border: 2px solid #adadad; display: flex; align-items: center; justify-content: center; }
.btn { width: 99px; height: 34px; background: #e1e1e1; border: 1px solid #adadad; text-align: center; line-height: 32px; font-weight: 400; white-space: nowrap; }
.listbox { width: 441px; height: 83px; background: #fff; border: 1px solid #7f7f7f; display: flex; justify-content: flex-end; }
.list-scroll { width: 21px; background: #f7f7f7; display: flex; flex-direction: column; align-items: center; justify-content: space-between; padding: 12px 0 11px; }
.btn-col { display: flex; flex-direction: column; gap: 11px; }
.lower { display: flex; margin-top: 15px; }
.fieldset { width: 110px; height: 84px; border: 1px solid #dcdcdc; padding-left: 11px; }
.legend { height: 20px; line-height: 20px; margin: -10px 0 0 -3px; font-weight: 400; width: 62px; background: #f0f0f0; }
.chk { display: flex; align-items: center; height: 20px; font-weight: 400; white-space: nowrap; margin-top: 9px; }
.chk.first { margin-top: 12px; }
.chk i { width: 16px; height: 16px; background: #fff; border: 1px solid #333; margin-right: 5px; flex: none; }
.chk.link { align-self: flex-end; margin: 0 0 12px 14px; }
.actions { display: flex; justify-content: flex-end; gap: 14px; margin-top: 20px; }
.actions .btn { line-height: 34px; }
.actions .btn.primary { width: 98px; border: 2px solid #0078d7; line-height: 32px; }

/* annotations */
.redbox { position: absolute; border: 3px solid #e8383d; pointer-events: none; }
.big-red { left: 655px; top: 239px; width: 714px; height: 557px; }
.small-red { left: 735px; top: 356px; width: 221px; height: 81px; }

/* watermark */
.wm { position: absolute; left: 1470px; top: 825px; width: 350px; height: 170px; }
.paw { position: absolute; left: 105px; top: 0; }
.wm span { position: absolute; white-space: nowrap; color: rgba(255,255,255,.45); -webkit-text-stroke: 2px #d6d6d6; font-family: "Open Sans", sans-serif; font-weight: 700; }
.wm .wm-bai { left: 2px; top: 29px; font-size: 76px; line-height: 90px; }
.wm .wm-du { left: 144px; top: 50px; font-size: 44px; line-height: 60px; -webkit-text-stroke-width: 1.500px; }
.wm .wm-jy { left: 226px; top: 38px; font-size: 58px; line-height: 80px; font-family: "Noto Sans CJK SC", sans-serif; }
.wm .wm-url { left: 6px; top: 112px; font-size: 41px; line-height: 56px; font-weight: 400; letter-spacing: 1px; -webkit-text-stroke-width: 1.500px; }

.logo7 { position: absolute; left: 1740px; top: 950px; width: 180px; height: 80px; background: rgba(150,150,150,.82); overflow: hidden; }
.logo7 span { position: absolute; white-space: nowrap; font-family: "Noto Sans CJK SC", sans-serif; font-weight: 700; }
.logo-ring { position: absolute; left: 44px; top: -3px; }
.logo7 .lg-7b { left: 15px; top: 24px; font-size: 32px; line-height: 40px; color: #ececec; font-weight: 400; }
.logo7 .lg-7 { left: 20px; top: 6px; font-size: 28px; line-height: 36px; color: #2c4a36; }
.logo7 .lg-site { left: 62px; top: 13px; font-size: 26px; line-height: 34px; color: #8dc04f; }
.logo7 .lg-url { left: 110px; top: 12px; font-size: 12px; letter-spacing: 1px; line-height: 20px; color: #f2f2f2; font-family: "Open Sans", sans-serif; font-weight: 400; }
.logo7 .lg-pin { left: 51px; top: 43px; font-size: 7.500px; line-height: 10px; color: #111; font-family: "Liberation Serif", serif; font-weight: 400; }
.logo7 .lg-game { left: 99px; top: 33px; font-size: 31px; line-height: 42px; color: #f6f6f6; }
```
